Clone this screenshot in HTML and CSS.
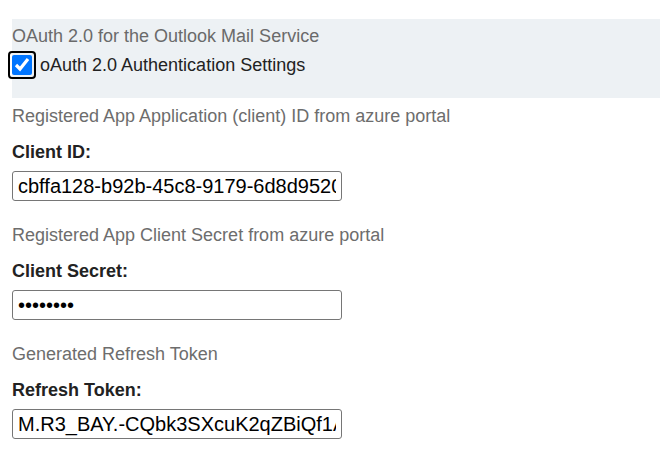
FILE: index.html
```html
<!DOCTYPE html>
<html>
<head>
<meta charset="utf-8">
<link rel="stylesheet" href="styles.css">
</head>
<body>
<div class="page">
  <div class="panel">
    <div class="panel-title">OAuth 2.0 for the Outlook Mail Service</div>
    <label class="check-row">
      <span class="focus-ring"><input type="checkbox" class="check" checked></span>
      <span class="check-label">oAuth 2.0 Authentication Settings</span>
    </label>
  </div>
  <div class="fields">
    <div class="field">
      <div class="desc">Registered App Application (client) ID from azure portal</div>
      <div class="label">Client ID:</div>
      <input class="text-input" type="text" value="cbffa128-b92b-45c8-9179-6d8d95206a1e">
    </div>
    <div class="field">
      <div class="desc">Registered App Client Secret from azure portal</div>
      <div class="label">Client Secret:</div>
      <input class="text-input" type="password" value="abcdefgh">
    </div>
    <div class="field">
      <div class="desc">Generated Refresh Token</div>
      <div class="label">Refresh Token:</div>
      <input class="text-input" type="text" value="M.R3_BAY.-CQbk3SXcuK2qZBiQf1A8xyz">
    </div>
  </div>
</div>
</body>
</html>
```
FILE: styles.css
```css
html, body {
  margin: 0;
  padding: 0;
  background: #ffffff;
}
body {
  font-family: "Liberation Sans", Arial, sans-serif;
  font-size: 18px;
  color: #222;
}
.page {
  padding: 19px 0 0 12px;
}
.panel {
  background: #edf1f4;
  padding: 8px 0 19px 0;
  display: flex;
  flex-direction: column;
}
.panel-title {
  line-height: 19px;
  color: #6a6a6a;
}
.check-row {
  display: flex;
  align-items: center;
  margin-top: 5px;
  height: 28px;
  margin-left: -4px;
}
.focus-ring {
  display: inline-flex;
  align-items: center;
  justify-content: center;
  width: 24px;
  height: 24px;
  border: 2px solid #000;
  border-radius: 4px;
}
.check {
  margin: 0;
  width: 20px;
  height: 20px;
  accent-color: #0075ff;
}
.check-label {
  margin-left: 4px;
  color: #222;
  line-height: 20px;
}
.fields {
  margin-top: 9px;
  display: flex;
  flex-direction: column;
  gap: 25px;
}
.field {
  display: flex;
  flex-direction: column;
  align-items: flex-start;
}
.desc {
  line-height: 19px;
  color: #6d6d6d;
}
.label {
  margin-top: 17px;
  line-height: 19px;
  font-weight: bold;
  color: #222;
}
.text-input {
  margin-top: 9px;
  box-sizing: border-box;
  width: 330px;
  height: 30px;
  padding: 0 5px;
  border: 1px solid #767676;
  border-radius: 3px;
  font-family: "Liberation Sans", Arial, sans-serif;
  font-size: 20px;
  color: #000;
  background: #fff;
}
```
